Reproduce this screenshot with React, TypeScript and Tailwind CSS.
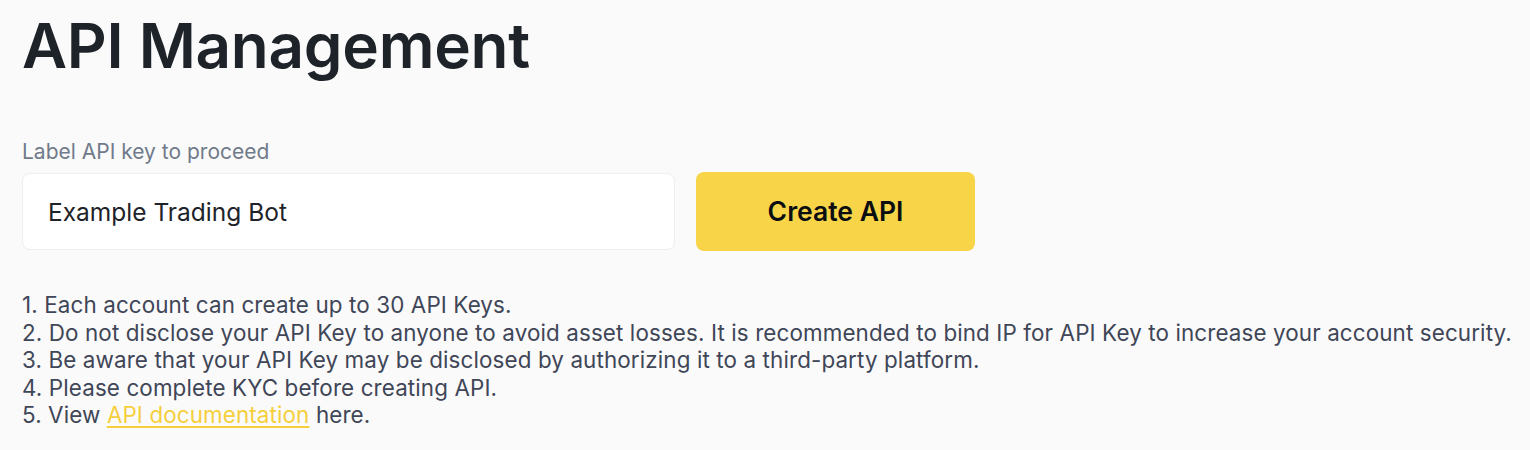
export default function App() {
  const notes = [
    'Each account can create up to 30 API Keys.',
    'Do not disclose your API Key to anyone to avoid asset losses. It is recommended to bind IP for API Key to increase your account security.',
    'Be aware that your API Key may be disclosed by authorizing it to a third-party platform.',
    'Please complete KYC before creating API.',
  ];

  return (
    <div className="min-h-[450px] bg-[#fafafa] pl-[22px] pt-[6px] font-['Inter',sans-serif] text-[#1e2329]">
      <h1 className="text-[62px] font-semibold leading-[80px] tracking-[-0.3px]">API Management</h1>

      <div className="mt-[52px]">
        <label className="block text-[21px] leading-[28px] text-[#707a8a]">Label API key to proceed</label>
        <div className="mt-[7px] flex gap-[21px]">
          <input
            defaultValue="Example Trading Bot"
            className="h-[77px] w-[653px] rounded-[8px] border border-[#eeeeee] bg-white px-[25px] text-[24.5px] text-[#1e2329] outline-none"
          />
          <button className="-mt-[1px] h-[79px] w-[279px] rounded-[8px] bg-[#f8d548] text-[26.5px] font-semibold text-[#0b0e11]">
            Create API
          </button>
        </div>
      </div>

      <ol className="mt-[40px] whitespace-nowrap text-[22.4px] leading-[27.5px] tracking-[0.12px] text-[#3f4657]">
        {notes.map((n, i) => (
          <li key={i}>
            {i + 1}. {n}
          </li>
        ))}
        <li>
          5. View{' '}
          <a href="#" className="text-[#f5cf3c] underline underline-offset-[3px]">
            API documentation
          </a>{' '}
          here.
        </li>
      </ol>
    </div>
  );
}
